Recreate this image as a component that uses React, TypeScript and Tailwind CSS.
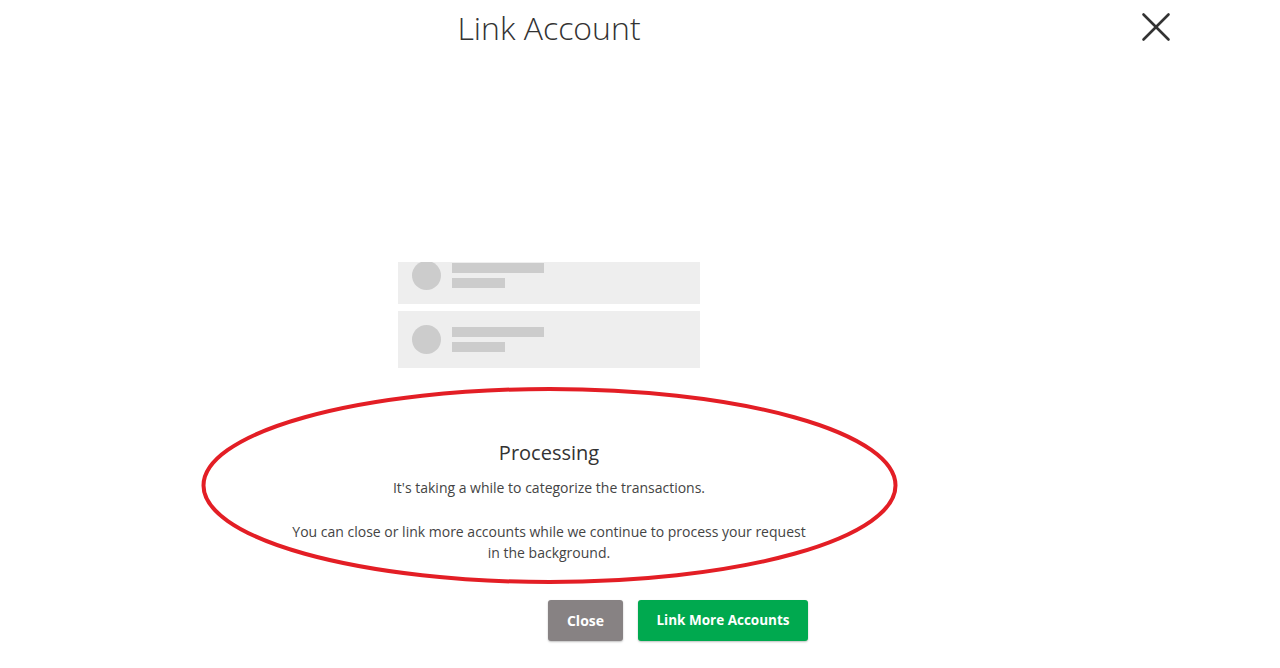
function SkeletonCard() {
  return (
    <div className="h-[57px] w-full shrink-0 bg-[#eeeeee] flex items-center pl-[14px] gap-[11px]">
      <div className="w-[29px] h-[29px] rounded-full bg-[#cccccc]" />
      <div className="flex flex-col gap-[5px]">
        <div className="w-[92px] h-[10px] bg-[#cccccc]" />
        <div className="w-[53px] h-[10px] bg-[#cccccc]" />
      </div>
    </div>
  );
}

export default function App() {
  return (
    <div
      className="relative w-full h-[668px] bg-white overflow-hidden text-[#333333]"
      style={{ fontFamily: '"Open Sans", "Noto Sans", sans-serif' }}
    >
      <div className="flex items-start">
        {/* Main column */}
        <div className="w-[1098px] flex flex-col items-center">
          <h1 className="h-[56px] leading-[56px] text-[32px] font-light text-[#333333]">Link Account</h1>

          {/* Account skeleton list (scrolled) */}
          <div className="mt-[206px] w-[302px] h-[106px] overflow-hidden">
            <div className="-mt-[15px] flex flex-col gap-[7px]">
              <SkeletonCard />
              <SkeletonCard />
            </div>
          </div>

          {/* Status */}
          <div className="mt-[71px] text-[20px] leading-[28px] text-[#333333]">Processing</div>
          <p className="mt-[10px] text-[14px] leading-[21px] text-[#444444]">
            It's taking a while to categorize the transactions.
          </p>
          <p className="mt-[23px] text-[14px] leading-[21px] text-[#444444] text-center">
            You can close or link more accounts while we continue to process your request
            <br />
            in the background.
          </p>

          {/* Actions */}
          <div className="mt-[37px] ml-[258px] flex gap-[15px]">
            <button className="w-[75px] h-[41px] rounded-[3px] bg-[#878283] text-white text-[14px] font-bold shadow-[0_1px_2px_rgba(0,0,0,0.25)]">
              Close
            </button>
            <button className="w-[170px] h-[41px] rounded-[3px] bg-[#00a94f] text-white text-[13.5px] font-bold shadow-[0_1px_2px_rgba(0,0,0,0.25)]">
              Link More Accounts
            </button>
          </div>
        </div>

        {/* Close icon */}
        <div className="flex-1 flex justify-end pr-[108px] pt-[11px]">
          <button aria-label="Close" className="text-[#333333]">
            <svg width="32" height="32" viewBox="0 0 32 32" fill="none" stroke="currentColor" strokeWidth="2.6" strokeLinecap="round">
              <path d="M3.5 3.5 L28.5 28.5" />
              <path d="M28.5 3.5 L3.5 28.5" />
            </svg>
          </button>
        </div>
      </div>

      {/* Red annotation ellipse */}
      <svg className="absolute inset-0 pointer-events-none" width="1280" height="668">
        <ellipse cx="549.5" cy="485.5" rx="346" ry="96.5" fill="none" stroke="#e31e25" strokeWidth="4" />
      </svg>
    </div>
  );
}
